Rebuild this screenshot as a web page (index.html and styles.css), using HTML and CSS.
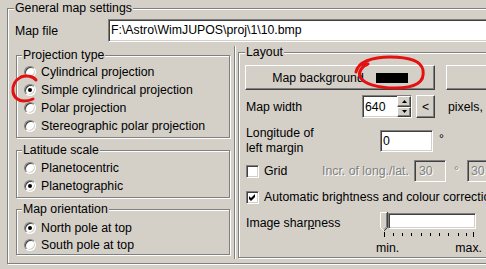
FILE: index.html
```html
<!DOCTYPE html>
<html>
<head>
<meta charset="utf-8">
<link rel="stylesheet" href="styles.css">
</head>
<body>
<div class="group outer">
  <span class="title t6">General map settings</span>
  <div class="mapfile">
    <span class="mf-label">Map file</span>
    <div class="sunken mf-edit">F:\Astro\WimJUPOS\proj\1\10.bmp</div>
  </div>
  <div class="cols">
    <div class="leftcol">
      <div class="group proj">
        <span class="title">Projection type</span>
        <div class="opt"><span class="radio"></span>Cylindrical projection</div>
        <div class="opt"><span class="radio on"></span>Simple cylindrical projection</div>
        <div class="opt"><span class="radio"></span>Polar projection</div>
        <div class="opt"><span class="radio"></span>Stereographic polar projection</div>
      </div>
      <div class="group lat">
        <span class="title">Latitude scale</span>
        <div class="opt"><span class="radio"></span>Planetocentric</div>
        <div class="opt"><span class="radio on"></span>Planetographic</div>
      </div>
      <div class="group orient">
        <span class="title">Map orientation</span>
        <div class="opt"><span class="radio on"></span>North pole at top</div>
        <div class="opt"><span class="radio"></span>South pole at top</div>
      </div>
    </div>
    <div class="vline"></div>
    <div class="group layout">
      <span class="title t6">Layout</span>
      <div class="btnrow">
        <div class="btn bg-btn"><span>Map background</span><span class="swatch"></span></div>
        <div class="btn other-btn"></div>
      </div>
      <div class="widthrow">
        <span class="w116">Map width</span>
        <div class="sunken spin">
          <span>640</span>
          <div class="spinbtns">
            <div class="btn sbtn"><svg width="5" height="3" viewBox="0 0 5 3"><path d="M0 3 L2.5 0 L5 3 Z" fill="#000"/></svg></div>
            <div class="btn sbtn"><svg width="5" height="3" viewBox="0 0 5 3"><path d="M0 0 L5 0 L2.5 3 Z" fill="#000"/></svg></div>
          </div>
        </div>
        <div class="btn small-btn">&lt;</div>
        <span class="pixels">pixels,</span>
      </div>
      <div class="longrow">
        <span class="w134">Longitude of<br>left margin</span>
        <div class="sunken longedit">0</div>
        <span class="deg">°</span>
      </div>
      <div class="gridrow">
        <span class="check"></span>
        <span class="gridlbl">Grid</span>
        <span class="incr disabled">Incr. of long./lat.</span>
        <div class="sunken dedit disabled">30</div>
        <span class="deg2 disabled">°</span>
        <div class="sunken dedit2 disabled">30</div>
      </div>
      <div class="autorow">
        <span class="check"><svg width="11" height="11" viewBox="0 0 11 11"><path d="M2 4 L4 6 L8 2 L8 5 L4 9 L2 7 Z" fill="#000"/></svg></span>
        <span class="autolbl">Automatic brightness and colour correction</span>
      </div>
      <div class="sharprow">
        <span class="w134 sharplbl">Image shar<u>p</u>ness</span>
        <div class="slider">
          <div class="slidetop">
            <svg class="thumb" width="8" height="20" viewBox="0 0 8 20">
              <path d="M0 0 H8 V15 L4 19 L0 15 Z" fill="#d4d0c8"/>
              <path d="M0.5 15.5 V0.5 H7" fill="none" stroke="#fff"/>
              <path d="M0.5 15.5 L4 19" fill="none" stroke="#fff"/>
              <path d="M7.5 0 V15.5 L4 19" fill="none" stroke="#404040"/>
              <path d="M6.5 1 V15 L4 17.5" fill="none" stroke="#808080"/>
            </svg>
            <div class="track"></div>
          </div>
          <svg class="ticks" width="96" height="6" viewBox="0 0 96 6">
            <rect x="4" y="0" width="1" height="5" fill="#000"/>
            <rect x="13" y="1" width="1" height="3" fill="#000"/>
            <rect x="22" y="1" width="1" height="3" fill="#000"/>
            <rect x="31" y="1" width="1" height="3" fill="#000"/>
            <rect x="41" y="1" width="1" height="3" fill="#000"/>
            <rect x="50" y="1" width="1" height="3" fill="#000"/>
            <rect x="59" y="1" width="1" height="3" fill="#000"/>
            <rect x="68" y="1" width="1" height="3" fill="#000"/>
            <rect x="78" y="1" width="1" height="3" fill="#000"/>
            <rect x="86" y="1" width="1" height="3" fill="#000"/>
            <rect x="93" y="0" width="1" height="5" fill="#000"/>
          </svg>
          <div class="minmax"><span>min.</span><span>max.</span></div>
        </div>
      </div>
    </div>
  </div>
</div>
<svg class="marks" width="486" height="269" viewBox="0 0 486 269">
  <path d="M36 80 C33 76 26 75 21 77 C15 80 12 86 13 92 C14 98 19 101 24 101 C28 101 31 100 33 99" fill="none" stroke="#e51010" stroke-width="3" stroke-linecap="round"/>
  <path d="M356 72 C358 62 372 57 390 57 C408 57 421 60 423 70 C425 82 416 88 395 88 C378 88 364 84 360 77 C358 72 362 66 368 64" fill="none" stroke="#e51010" stroke-width="3" stroke-linecap="round"/>
</svg>
</body>
</html>
```
FILE: styles.css
```css
* { box-sizing: border-box; }
html, body { margin: 0; padding: 0; }
body {
  width: 486px;
  height: 269px;
  overflow: hidden;
  position: relative;
  background: #d4d0c8;
  font-family: "Liberation Sans", Arial, sans-serif;
  font-size: 12.3px;
  color: #000;
}
.group {
  position: relative;
  border: 1px solid #808080;
  box-shadow: inset 1px 1px 0 #fff, 1px 1px 0 #fff;
  flex-shrink: 0;
}
.title {
  position: absolute;
  top: -8px;
  left: 5px;
  padding: 0 1px;
  line-height: 14px;
  background: #d4d0c8;
  white-space: nowrap;
}
.title.t6 { left: 6px; }
.sunken {
  border: 1px solid;
  border-color: #808080 #fff #fff #808080;
  box-shadow: inset 1px 1px 0 #404040, inset -1px -1px 0 #d4d0c8;
  background: #fff;
}
.btn {
  background: #d4d0c8;
  border: 1px solid;
  border-color: #fff #404040 #404040 #fff;
  box-shadow: inset -1px -1px 0 #808080;
}
.disabled { color: #808080; text-shadow: 1px 1px 0 #fff; }

.outer {
  margin: 8px 0 0 7px;
  width: 560px;
  height: 256px;
  padding: 10px 0 0 7px;
}
.mapfile { display: flex; align-items: center; height: 23px; }
.mf-label { width: 93px; flex-shrink: 0; }
.mf-edit {
  flex: 1;
  height: 23px;
  line-height: 21px;
  padding-left: 2px;
  white-space: nowrap;
  overflow: hidden;
}

.cols { display: flex; align-items: flex-start; }
.leftcol {
  margin-left: 1px;
  width: 214px;
  flex-shrink: 0;
  display: flex;
  flex-direction: column;
}
.proj { margin-top: 13px; height: 83px; padding: 7px 0 0 7px; }
.lat { margin-top: 12px; height: 48px; padding: 8px 0 0 7px; }
.orient { margin-top: 11px; height: 46px; padding: 9px 0 0 7px; }
.opt {
  display: flex;
  align-items: center;
  gap: 5px;
  height: 18px;
  white-space: nowrap;
}
.orient .opt { height: 17px; }
.radio {
  position: relative;
  width: 12px;
  height: 12px;
  flex-shrink: 0;
  border-radius: 50%;
  border: 1px solid;
  border-color: #808080 #fff #fff #808080;
  box-shadow: inset 1px 1px 0 #404040, inset -1px -1px 0 #d4d0c8;
  background: #fff;
}
.radio.on::after {
  content: "";
  position: absolute;
  left: 3px;
  top: 3px;
  width: 4px;
  height: 4px;
  border-radius: 50%;
  background: #000;
}

.vline {
  flex-shrink: 0;
  margin-left: 4px;
  margin-top: 4px;
  width: 2px;
  height: 213px;
  border-left: 1px solid #808080;
  background: #fff;
}
.layout {
  margin-left: 2px;
  margin-top: 10px;
  width: 400px;
  height: 206px;
  padding: 12px 0 0 7px;
  display: flex;
  flex-direction: column;
  white-space: nowrap;
}
.btnrow { display: flex; gap: 11px; height: 25px; margin-left: -1px; }
.bg-btn {
  width: 190px;
  display: flex;
  align-items: center;
  justify-content: center;
  gap: 12px;
}
.swatch { width: 32px; height: 10px; background: #000; }
.other-btn { width: 100px; }

.widthrow { display: flex; align-items: center; height: 23px; margin-top: 5px; }
.w116 { width: 116px; flex-shrink: 0; }
.spin {
  width: 50px;
  height: 23px;
  display: flex;
  align-items: center;
  padding-left: 2px;
}
.spinbtns {
  margin-left: auto;
  width: 14px;
  height: 21px;
  display: flex;
  flex-direction: column;
}
.sbtn {
  flex: 1;
  display: flex;
  align-items: center;
  justify-content: center;
}
.sbtn svg { display: block; }
.small-btn {
  margin-left: 4px;
  width: 19px;
  height: 23px;
  display: flex;
  align-items: center;
  justify-content: center;
}
.pixels { margin-left: 13px; }

.longrow { display: flex; align-items: flex-start; height: 30px; margin-top: 8px; }
.w134 { width: 134px; flex-shrink: 0; line-height: 15px; }
.longedit {
  width: 53px;
  height: 22px;
  margin-top: 4px;
  padding-left: 2px;
  line-height: 20px;
}
.deg { margin-left: 6px; margin-top: 6px; line-height: 15px; }

.gridrow { display: flex; align-items: center; height: 22px; margin-top: 4px; }
.check {
  display: block;
  width: 13px;
  height: 13px;
  flex-shrink: 0;
  border: 1px solid;
  border-color: #808080 #fff #fff #808080;
  box-shadow: inset 1px 1px 0 #404040, inset -1px -1px 0 #d4d0c8;
  background: #fff;
}
.check svg { display: block; }
.gridlbl { margin-left: 5px; width: 58px; flex-shrink: 0; }
.incr { width: 92px; flex-shrink: 0; }
.dedit, .dedit2 {
  height: 22px;
  line-height: 20px;
  padding-left: 4px;
  background: #d4d0c8;
  flex-shrink: 0;
}
.dedit { width: 32px; }
.dedit2 { width: 40px; padding-left: 3px; }
.deg2 { width: 21px; padding-left: 8px; flex-shrink: 0; }

.autorow { display: flex; align-items: center; height: 16px; margin-top: 7px; }
.autolbl { margin-left: 5px; }

.sharprow { display: flex; margin-top: 7px; }
.sharplbl { margin-top: 3px; line-height: 16px; }
.slider { width: 96px; display: flex; flex-direction: column; flex-shrink: 0; }
.slidetop { display: flex; height: 20px; }
.thumb { display: block; flex-shrink: 0; }
.track {
  width: 88px;
  height: 16px;
  margin-top: 1px;
  border: 1px solid;
  border-color: #808080 #fff #fff #808080;
  box-shadow: inset 1px 1px 0 #404040, inset -1px -1px 0 #d4d0c8;
  background: #fff;
}
.ticks { display: block; }
.minmax {
  display: flex;
  justify-content: space-between;
  margin: 3px -6px 0 -4px;
  line-height: 14px;
}

.marks {
  position: absolute;
  left: 0;
  top: 0;
  pointer-events: none;
}
```
